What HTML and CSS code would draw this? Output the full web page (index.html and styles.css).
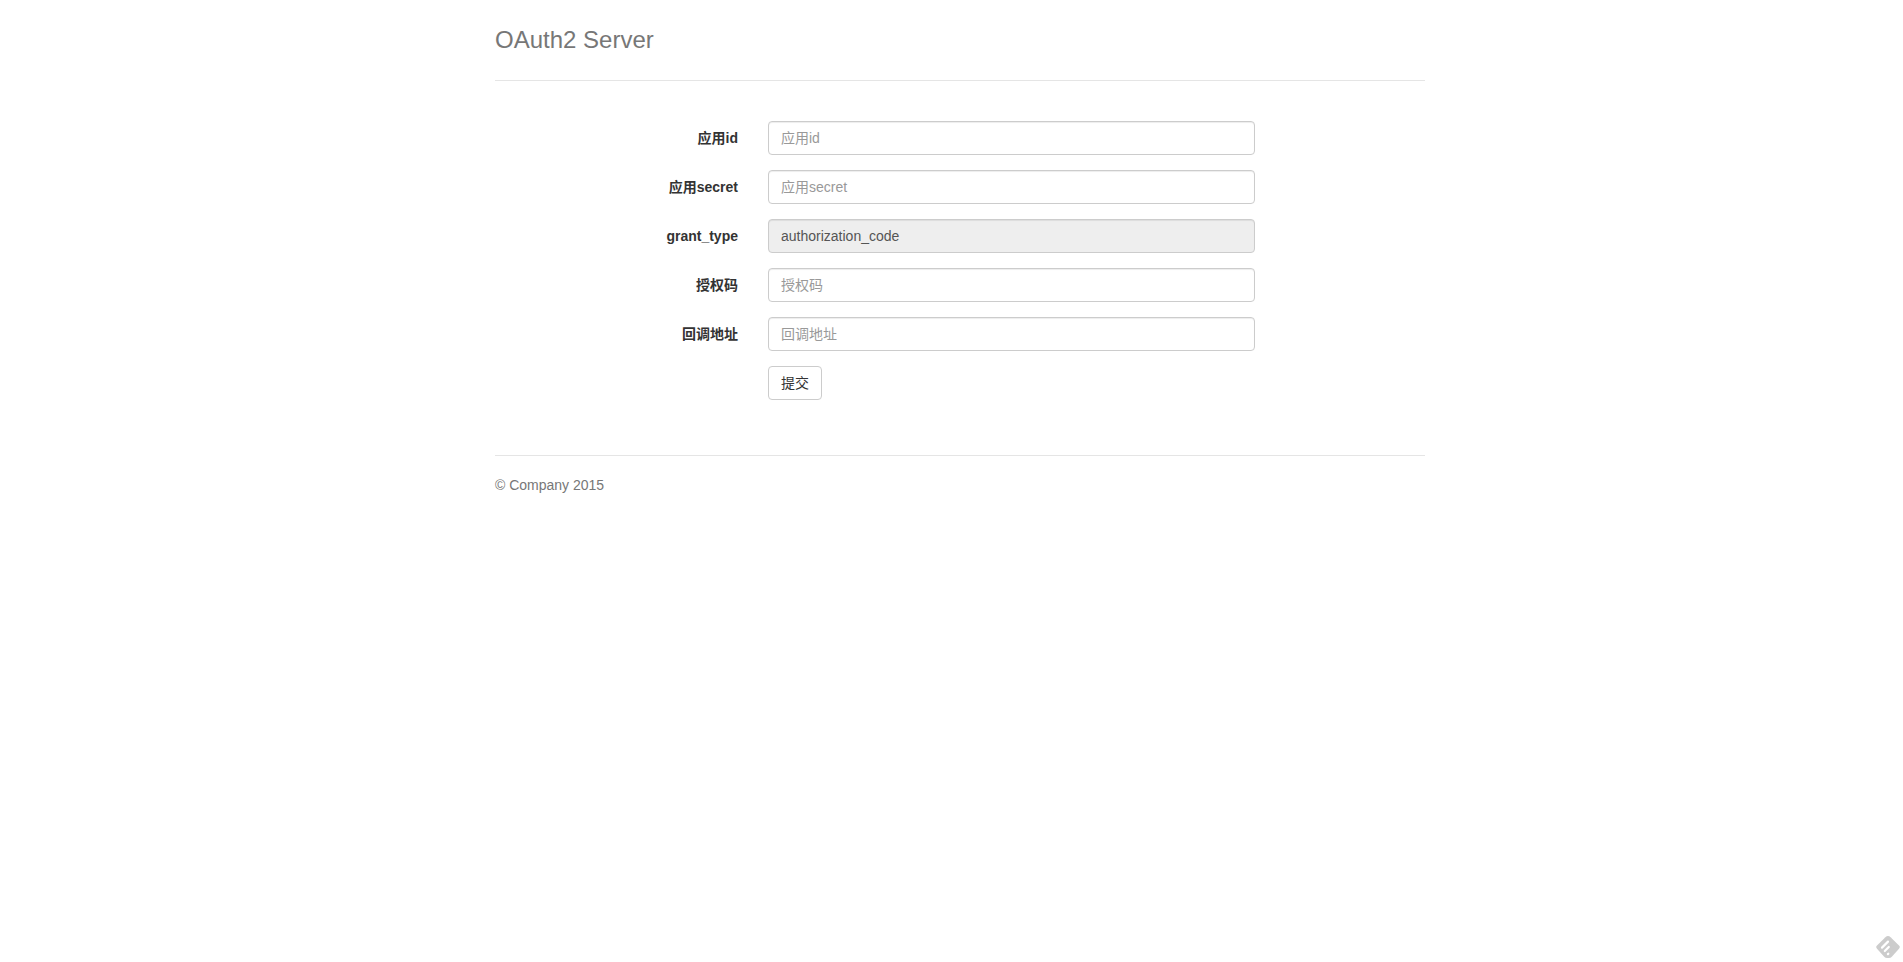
FILE: index.html
```html
<!DOCTYPE html>
<html lang="zh-CN">
<head>
<meta charset="utf-8">
<title>OAuth2 Server</title>
<link rel="stylesheet" href="styles.css">
</head>
<body>
<div class="container">
  <header class="header">
    <h3 class="title">OAuth2 Server</h3>
  </header>
  <form class="form">
    <label class="label" for="app-id">应用id</label>
    <input class="control" id="app-id" type="text" placeholder="应用id">
    <label class="label" for="app-secret">应用secret</label>
    <input class="control" id="app-secret" type="text" placeholder="应用secret">
    <label class="label" for="grant-type">grant_type</label>
    <input class="control" id="grant-type" type="text" value="authorization_code" readonly>
    <label class="label" for="code">授权码</label>
    <input class="control" id="code" type="text" placeholder="授权码">
    <label class="label" for="redirect">回调地址</label>
    <input class="control" id="redirect" type="text" placeholder="回调地址">
    <button class="button" type="submit">提交</button>
  </form>
  <footer class="footer">
    <p class="copyright">© Company 2015</p>
  </footer>
</div>
<a class="reader" href="#" aria-label="feedly">
  <svg width="24" height="22" viewBox="0 0 24 22">
    <path d="M9.4 1.2Q12 -1.2 14.6 1.2L23 9.4Q24.6 11 23 12.8L15.8 20.8Q14.6 22 13 22H11Q9.4 22 8.2 20.8L1 12.8Q-.6 11 1 9.4Z" fill="#ccc"/>
    <path d="M6 11.6L12 5.6M8.8 15L12.8 11M11.9 18.1L12.3 17.7" fill="none" stroke="#fff" stroke-width="2.2" stroke-linecap="round"/>
  </svg>
</a>
</body>
</html>
```
FILE: styles.css
```css
* {
  box-sizing: border-box;
}

body {
  margin: 0;
  padding: 20px 0 20px 17px;
  background: #fff;
  color: #333;
  font-family: "Liberation Sans", Arial, "Noto Sans CJK SC", sans-serif;
  font-size: 14px;
  line-height: 20px;
}

.container {
  max-width: 930px;
  margin: 0 auto;
}

.header {
  margin-bottom: 40px;
  padding-bottom: 20px;
  border-bottom: 1px solid #e5e5e5;
  color: #777;
}

.title {
  margin: 0;
  font-size: 24px;
  font-weight: 500;
  line-height: 40px;
}

.form {
  display: grid;
  grid-template-columns: 243px 1fr;
  gap: 15px 30px;
  align-items: center;
  margin-bottom: 55px;
  padding-right: 170px;
}

.label {
  font-weight: 700;
  text-align: right;
}

.control {
  width: 100%;
  height: 34px;
  padding: 6px 12px;
  border: 1px solid #ccc;
  border-radius: 4px;
  background: #fff;
  box-shadow: inset 0 1px 1px rgba(0, 0, 0, 0.075);
  color: #555;
  font: inherit;
}

.control::placeholder {
  color: #999;
  opacity: 1;
}

.control:read-only {
  background: #eee;
}

.button {
  grid-column: 2;
  justify-self: start;
  height: 34px;
  padding: 6px 12px;
  border: 1px solid #ccc;
  border-radius: 4px;
  background: #fff;
  color: #333;
  font: inherit;
}

.footer {
  padding-top: 19px;
  border-top: 1px solid #e5e5e5;
  color: #777;
}

.copyright {
  margin: 0;
}

.reader {
  position: fixed;
  right: 3px;
  bottom: 4px;
}

.reader svg {
  display: block;
}
```
